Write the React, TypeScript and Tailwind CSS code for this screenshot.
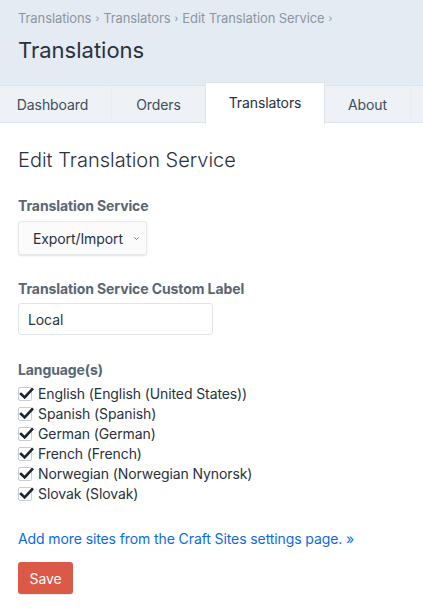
import React from "react";

const langs = [
  "English (English (United States))",
  "Spanish (Spanish)",
  "German (German)",
  "French (French)",
  "Norwegian (Norwegian Nynorsk)",
  "Slovak (Slovak)",
];

function Check() {
  return (
    <span className="relative flex h-[14px] w-[14px] shrink-0 items-center justify-center rounded-[2px] border border-[#c8cdd3] bg-white">
      <svg viewBox="0 0 16 16" className="absolute left-[0px] top-[-2px] h-[15px] w-[15px]">
        <path d="M2.2 8.6 L6 12.2 L14 3.6" fill="none" stroke="#1c2630" strokeWidth="2.8" strokeLinecap="square" strokeLinejoin="miter" />
      </svg>
    </span>
  );
}

export default function App() {
  return (
    <div className="min-h-[613px] w-[423px] overflow-hidden bg-white text-[14px] text-[#29323d]" style={{ fontFamily: "Inter, 'Noto Sans', sans-serif" }}>
      <div className="bg-[#e4ebf3]">
        <div className="px-[18px] pt-[8px]">
          <div className="flex items-center text-[13px] leading-[20px] text-[#8c96a1] tracking-[-0.1px]">
            <span>Translations</span>
            <span className="mx-[4px] text-[10px]">›</span>
            <span>Translators</span>
            <span className="mx-[4px] text-[10px]">›</span>
            <span>Edit Translation Service</span>
            <span className="mx-[4px] text-[10px]">›</span>
          </div>
          <h1 className="mt-[7px] text-[22px] font-normal leading-[30px] text-[#29323d]">Translations</h1>
        </div>
        <div className="mt-[20px] h-[38px] border-t border-b border-[#dde4eb] bg-[#eef2f6]">
          <div className="-ml-[6px] flex h-full tracking-[-0.1px]">
            <div className="flex h-full w-[118px] shrink-0 items-center justify-center border-r border-[#e9edf2] text-[#3f4d5a]">Dashboard</div>
            <div className="flex h-full w-[93px] shrink-0 items-center justify-center text-[#3f4d5a]">Orders</div>
            <div className="relative -mt-[4px] flex h-[42px] w-[120px] shrink-0 items-center justify-center rounded-t-[2px] border border-b-0 border-[#dde4eb] bg-white pb-[2px] text-[#29323d]">Translators</div>
            <div className="flex h-full w-[86px] shrink-0 items-center justify-center border-r border-[#e9edf2] text-[#3f4d5a]">About</div>
          </div>
        </div>
      </div>

      <div className="px-[18px] pt-[23px] tracking-[-0.1px]">
        <h2 className="text-[20px] font-light leading-[28px] text-[#29323d] tracking-normal">Edit Translation Service</h2>

        <div className="mt-[22px] text-[14px] font-bold leading-[20px] text-[#596673]">Translation Service</div>
        <div className="mt-[5px] flex h-[34px] w-[129px] items-center rounded-[3px] border border-[#e6e9ec] bg-[#fbfbfc] pl-[14px] shadow-[0_1px_2px_rgba(0,0,0,0.12)]">
          <span className="text-[14px] text-[#29323d]">Export/Import</span>
          <svg viewBox="0 0 10 10" className="ml-[10px] h-[7px] w-[7px]">
            <path d="M2 3.5 L5 6.5 L8 3.5" fill="none" stroke="#596673" strokeWidth="1.2" />
          </svg>
        </div>

        <div className="mt-[24px] text-[14px] font-bold leading-[20px] text-[#596673]">Translation Service Custom Label</div>
        <div className="mt-[4px] flex h-[32px] w-[195px] items-center rounded-[3px] border border-[#e0e5ea] bg-white pl-[9px]">
          <span className="text-[14px] text-[#29323d]">Local</span>
        </div>

        <div className="mt-[25px] text-[14px] font-bold leading-[20px] text-[#596673]">Language(s)</div>
        <div className="mt-[4px] flex flex-col">
          {langs.map((l) => (
            <div key={l} className="flex h-[20px] items-center gap-[6px]">
              <Check />
              <span className="text-[14px] leading-[20px] text-[#29323d]">{l}</span>
            </div>
          ))}
        </div>

        <a className="mt-[25px] block text-[14px] leading-[20px] text-[#0b69e3]" href="#">
          Add more sites from the Craft Sites settings page. »
        </a>

        <button className="mt-[13px] flex h-[32px] w-[55px] items-center justify-center rounded-[3px] bg-[#da5a47] text-[14px] text-white shadow-[0_1px_1px_rgba(0,0,0,0.1)]">
          Save
        </button>
      </div>
    </div>
  );
}
